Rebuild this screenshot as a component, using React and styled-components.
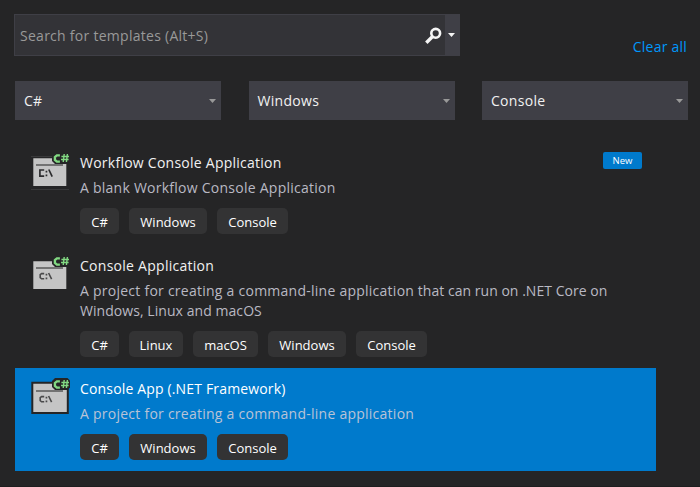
import React from "react";
import styled, { createGlobalStyle } from "styled-components";

const GlobalStyle = createGlobalStyle`
  * { box-sizing: border-box; }
  body {
    margin: 0;
    background: #252526;
    font-family: "Open Sans", "Noto Sans", sans-serif;
    font-size: 14px;
    color: #f1f1f1;
  }
`;

const Page = styled.main`
  width: 700px;
  height: 487px;
  padding: 14px 12px 0 14px;
  overflow: hidden;
  background: #252526;
  border-bottom: 1px solid #1e1e1f;
`;

const TopBar = styled.header`
  display: flex;
  justify-content: space-between;
  height: 42px;
`;

const SearchBox = styled.div`
  display: flex;
  align-items: center;
  width: 446px;
  height: 42px;
  border: 1px solid #3f3f46;
  background: #333337;
  padding-left: 5px;
`;

const Placeholder = styled.span`
  flex: 1;
  color: #999999;
  line-height: 20px;
  padding-top: 2px;
  letter-spacing: 0.27px;
  white-space: nowrap;
`;

const SearchMenuButton = styled.div`
  display: flex;
  align-items: center;
  justify-content: center;
  width: 14px;
  height: 40px;
  margin-left: 3px;
  padding-right: 1px;
  background: #3f3f46;
`;

const ClearLink = styled.a`
  margin-top: 23px;
  margin-right: 1px;
  line-height: 20px;
  color: #0097fb;
  white-space: nowrap;
  letter-spacing: 0.22px;
`;

const Filters = styled.div`
  display: grid;
  grid-template-columns: 206px 206px 206px;
  column-gap: 27.5px;
  margin: 25px 0 0 1px;
`;

const Select = styled.div`
  display: flex;
  align-items: center;
  justify-content: space-between;
  height: 39px;
  padding: 0 5px 0 9px;
  background: #3f3f46;
  letter-spacing: 0.3px;
`;

const List = styled.ul`
  list-style: none;
  margin: 22px 0 0 1px;
  padding: 0;
  width: 641px;
`;

const Item = styled.li`
  display: grid;
  grid-template-columns: 49px 1fr auto;
  padding: 11px 14px 11px 16px;
  background: ${(p) => (p.$selected ? "#007acc" : "transparent")};
`;

const Title = styled.div`
  line-height: 20px;
  letter-spacing: ${(p) => p.$spacing}px;
  color: ${(p) => (p.$selected ? "#ffffff" : "#f1f1f1")};
  white-space: nowrap;
`;

const Description = styled.div`
  margin-top: 5px;
  line-height: 20px;
  color: ${(p) => (p.$selected ? "#b9c3d6" : "#b9b9c3")};
  white-space: pre;
`;

const Run = styled.span`
  letter-spacing: ${(p) => p.$spacing}px;
`;

const Tags = styled.div`
  display: flex;
  gap: 10px;
  margin-top: 10px;
`;

const Tag = styled.span`
  display: flex;
  align-items: center;
  justify-content: center;
  width: ${(p) => p.$width}px;
  height: 26px;
  padding-top: 1px;
  border-radius: 5px;
  background: #333334;
  color: #ffffff;
  font-size: 13px;
`;

const NewBadge = styled.span`
  width: 39px;
  height: 17px;
  margin-top: -1px;
  border-radius: 2px;
  background: #007acc;
  color: #ffffff;
  font-size: 9.5px;
  line-height: 18px;
  text-align: center;
`;

const IconFrame = styled.svg`
  display: block;
  width: 40px;
  height: 40px;
  overflow: visible;
`;

const CaretShape = styled.svg`
  display: block;
  width: 7px;
  height: 4px;
  margin-top: ${(p) => p.$drop || 0}px;
`;

function Caret({ color, drop }) {
  return (
    <CaretShape viewBox="0 0 7 4" $drop={drop}>
      <path d="M0 0h7L3.5 4z" fill={color} />
    </CaretShape>
  );
}

function SearchIcon() {
  return (
    <svg width="17" height="17" viewBox="0 0 17 17" fill="none" stroke="#f5f5f5">
      <circle cx="10.7" cy="6.3" r="4.4" strokeWidth="2.6" />
      <path d="M7.3 9.7L1.3 15.7" strokeWidth="3.4" />
    </svg>
  );
}

function ConsoleIcon({ variant }) {
  const bold = variant === "workflow";
  return (
    <IconFrame viewBox="0 0 40 40">
      {variant === "framework" && <path d="M0.3 2.7h37.5V35H0.3z" fill="#252526" />}
      {variant === "workflow" && (
        <path d="M0 3.5h38M0 36.5h38" stroke="#39393a" strokeWidth="1" />
      )}
      <path d={variant === "framework" ? "M2.3 4.7h33.5V33H2.3z" : "M2.3 5.2h33V33h-33z"} fill="#c5c5c5" />
      <path d="M5 12h27" stroke="#3c3c3d" strokeWidth="1.2" />
      <g fill="none" stroke={bold ? "#2d2d2e" : "#4a4a4b"} strokeWidth={bold ? 1.7 : 1.6}>
        <path
          d={
            bold
              ? "M13.2 17H8.9v6.2h4.3M17.8 16.5l3.4 7.2"
              : "M13.2 17.6h-2.6l-1.4 1v3l1.4 1.2h2.6M17.6 17l3 6.2"
          }
        />
        <path d="M14.6 18.6h1.7M14.6 22.4h1.7" />
      </g>
      <path d="M24 -1h12.5l2.5 2.5v7L36.5 11H24l-3-3V2z" fill="#252526" />
      <g fill="none" stroke="#82d982">
        <path d="M28.9 2.4h-3l-2 1.7v2.8l2 1.8h3" strokeWidth="2.3" />
        <path d="M33.2 1l-1 8M36.4 1l-1 8M30.4 3.5h7.6M30 6.5h7.6" strokeWidth="1.4" />
      </g>
    </IconFrame>
  );
}

const tagWidths = { "C#": 39, Windows: 78, Console: 71, Linux: 54, macOS: 65 };

const templates = [
  {
    variant: "workflow",
    title: "Workflow Console Application",
    titleSpacing: 0.25,
    description: [{ text: "A blank Workflow Console Application", spacing: 0.25 }],
    tags: ["C#", "Windows", "Console"],
    isNew: true,
  },
  {
    variant: "core",
    title: "Console Application",
    titleSpacing: 0.27,
    description: [
      { text: "A project for creating a command-line application", spacing: 0.25 },
      { text: " that can run on .NET Core on\n", spacing: 0.03 },
      { text: "Windows, Linux and macOS", spacing: 0.06 },
    ],
    tags: ["C#", "Linux", "macOS", "Windows", "Console"],
  },
  {
    variant: "framework",
    title: "Console App (.NET Framework)",
    titleSpacing: 0.16,
    description: [
      { text: "A project for creating a command-line application", spacing: 0.25 },
    ],
    tags: ["C#", "Windows", "Console"],
    selected: true,
  },
];

const filters = ["C#", "Windows", "Console"];

function TemplateItem({ template: t }) {
  return (
    <Item $selected={t.selected}>
      <ConsoleIcon variant={t.variant} />
      <div>
        <Title $selected={t.selected} $spacing={t.titleSpacing}>{t.title}</Title>
        <Description $selected={t.selected}>
          {t.description.map((run) => (
            <Run key={run.text} $spacing={run.spacing}>{run.text}</Run>
          ))}
        </Description>
        <Tags>
          {t.tags.map((name) => (
            <Tag key={name} $width={tagWidths[name]}>{name}</Tag>
          ))}
        </Tags>
      </div>
      {t.isNew && <NewBadge>New</NewBadge>}
    </Item>
  );
}

export default function App() {
  return (
    <Page>
      <GlobalStyle />
      <TopBar>
        <SearchBox>
          <Placeholder>Search for templates (Alt+S)</Placeholder>
          <SearchIcon />
          <SearchMenuButton>
            <Caret color="#f5f5f5" />
          </SearchMenuButton>
        </SearchBox>
        <ClearLink>Clear all</ClearLink>
      </TopBar>
      <Filters>
        {filters.map((label) => (
          <Select key={label}>
            <span>{label}</span>
            <Caret color="#999999" drop={1} />
          </Select>
        ))}
      </Filters>
      <List>
        {templates.map((t) => (
          <TemplateItem key={t.title} template={t} />
        ))}
      </List>
    </Page>
  );
}
